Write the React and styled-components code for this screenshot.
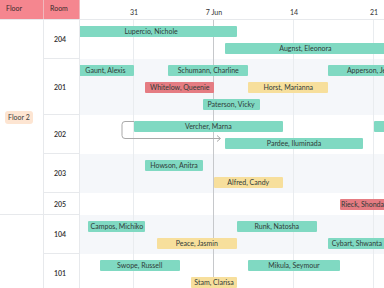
import React from 'react'
import styled, { createGlobalStyle } from 'styled-components'

const DAY = 80 / 7
const ORIGIN = 54 // local x of 31 May inside the track

const GlobalStyle = createGlobalStyle`
    html, body {
        margin: 0;
        padding: 0;
        background: #fff;
        font-family: Lato, "Open Sans", sans-serif;
        color: #333;
    }
`

const colors = {
    green: '#80d9c2',
    red: '#e57c82',
    yellow: '#f7df9c',
}

const floors = [
    {
        name: 'Floor 2',
        rooms: [
            {
                name: '204', lanes: 2, events: [
                    { who: 'Lupercio, Nichole', from: -6, to: 9, lane: 0 },
                    { who: 'Augnst, Eleonora', from: 8, to: 22, lane: 1 },
                ]
            },
            {
                name: '201', lanes: 3, shaded: true, events: [
                    { who: 'Gaunt, Alexis', from: -5, to: 0, lane: 0 },
                    { who: 'Schumann, Charline', from: 3, to: 10, lane: 0 },
                    { who: 'Apperson, Jennell', from: 17, to: 25, lane: 0 },
                    { who: 'Whitelow, Queenie', from: 1, to: 7, lane: 1, color: 'red' },
                    { who: 'Horst, Marianna', from: 10, to: 17, lane: 1, color: 'yellow' },
                    { who: 'Paterson, Vicky', from: 6, to: 11, lane: 2 },
                ]
            },
            {
                name: '202', lanes: 2, arrow: true, events: [
                    { who: 'Vercher, Marna', from: 0, to: 13, lane: 0 },
                    { who: 'Wynn, Dalia', from: 21, to: 29, lane: 0 },
                    { who: 'Pardee, Iluminada', from: 8, to: 20, lane: 1 },
                ]
            },
            {
                name: '203', lanes: 2, shaded: true, events: [
                    { who: 'Howson, Anitra', from: 1, to: 6, lane: 0 },
                    { who: 'Alfred, Candy', from: 7, to: 13, lane: 1, color: 'yellow' },
                ]
            },
            {
                name: '205', lanes: 1, events: [
                    { who: 'Rieck, Shonda', from: 18, to: 22, lane: 0, color: 'red' },
                ]
            },
        ]
    },
    {
        name: 'Floor 1',
        rooms: [
            {
                name: '104', lanes: 2, shaded: true, events: [
                    { who: 'Campos, Michiko', from: -4, to: 1, lane: 0 },
                    { who: 'Runk, Natosha', from: 9, to: 16, lane: 0 },
                    { who: 'Peace, Jasmin', from: 2, to: 9, lane: 1, color: 'yellow' },
                    { who: 'Cybart, Shwanta', from: 17, to: 22, lane: 1 },
                ]
            },
            {
                name: '101', lanes: 2, events: [
                    { who: 'Swope, Russell', from: -3, to: 4, lane: 0 },
                    { who: 'Mikula, Seymour', from: 10, to: 18, lane: 0 },
                    { who: 'Stam, Clarisa', from: 5, to: 9, lane: 1, color: 'yellow' },
                ]
            },
            {
                name: '102', lanes: 2, shaded: true, events: [
                    { who: 'Dorsey, Lenna', from: 0, to: 6, lane: 0 },
                ]
            },
            {
                name: '103', lanes: 2, events: [
                    { who: 'Ortega, Milo', from: 4, to: 12, lane: 0 },
                ]
            },
            {
                name: '105', lanes: 2, shaded: true, events: [
                    { who: 'Baird, Tessa', from: 2, to: 8, lane: 0 },
                ]
            },
            {
                name: '106', lanes: 2, events: [
                    { who: 'Lowe, Irvin', from: 9, to: 15, lane: 0 },
                ]
            },
        ]
    },
]

const ticks = [
    { label: '31', at: 0 },
    { label: '7 Jun', at: 7 },
    { label: '14', at: 14 },
    { label: '21', at: 21 },
]

export default function App() {
    return (
        <Page>
            <GlobalStyle />
            <Header>
                <HeadCell width={44}>Floor</HeadCell>
                <HeadCell width={36}>Room</HeadCell>
                <Scale>
                    {ticks.map(t => (
                        <Tick key={t.label} style={{ left: ORIGIN + t.at * DAY }}>{t.label}</Tick>
                    ))}
                </Scale>
            </Header>
            {floors.map(floor => (
                <FloorGroup key={floor.name}>
                    <FloorCell>
                        <FloorBadge>{floor.name}</FloorBadge>
                    </FloorCell>
                    <Rooms>
                        {floor.rooms.map(room => (
                            <RoomRow key={room.name} lanes={room.lanes}>
                                <RoomCell>{room.name}</RoomCell>
                                <Track shaded={room.shaded}>
                                    {room.events.map(ev => (
                                        <Bar
                                            key={ev.who}
                                            color={colors[ev.color || 'green']}
                                            lane={ev.lane}
                                            style={{
                                                left: ORIGIN + ev.from * DAY,
                                                width: (ev.to - ev.from) * DAY,
                                            }}
                                        >
                                            {ev.who}
                                        </Bar>
                                    ))}
                                    {room.arrow && (
                                        <Link width="160" height="30" viewBox="0 0 160 30">
                                            <path
                                                d="M54 6.5 H45 Q42 6.5 42 9.5 V20.5 Q42 23.5 45 23.5 H140"
                                                fill="none"
                                                stroke="#a9a9a9"
                                                strokeWidth="1"
                                            />
                                            <path
                                                d="M137 20.5 L140.5 23.5 L137 26.5"
                                                fill="none"
                                                stroke="#a9a9a9"
                                                strokeWidth="1"
                                            />
                                        </Link>
                                    )}
                                </Track>
                            </RoomRow>
                        ))}
                    </Rooms>
                </FloorGroup>
            ))}
        </Page>
    )
}

const Page = styled.div`
    width: 384px;
    height: 288px;
    overflow: hidden;
    background: #fff;
`

const Header = styled.div`
    display: flex;
    height: 19px;
    border-bottom: 1px solid #e7e9ec;
`

const HeadCell = styled.div`
    flex-shrink: 0;
    background: #f5868f;
    border-right: 1px solid #f0b8bd;
    padding: 4px 0 0 6px;
    box-sizing: border-box;
    width: ${props => props.width}px;
    font-size: 7px;
    line-height: 9px;
    color: #3a2a2c;
`

const Scale = styled.div`
    position: relative;
    flex: 1;
`

const Tick = styled.span`
    position: absolute;
    top: 7px;
    transform: translateX(-50%);
    font-size: 7px;
    line-height: 10px;
    color: #333;
    white-space: nowrap;
`

const FloorGroup = styled.div`
    display: flex;
`

const FloorCell = styled.div`
    width: 44px;
    flex-shrink: 0;
    box-sizing: border-box;
    border-right: 1px solid #e7e9ec;
    border-bottom: 1px solid #e7e9ec;
    display: flex;
    align-items: center;
    padding-left: 5px;
`

const FloorBadge = styled.span`
    background: #fde5d2;
    border-radius: 3px;
    padding: 2px 3px;
    font-size: 7px;
    line-height: 9px;
    color: #3a3a3a;
`

const Rooms = styled.div`
    flex: 1;
    display: flex;
    flex-direction: column;
`

const RoomRow = styled.div`
    display: flex;
    height: ${props => props.lanes * 17 + 5}px;
`

const RoomCell = styled.div`
    width: 36px;
    flex-shrink: 0;
    box-sizing: border-box;
    border-right: 1px solid #e7e9ec;
    border-bottom: 1px solid #e7e9ec;
    display: flex;
    align-items: center;
    padding-left: 10px;
    font-size: 7px;
    font-weight: 600;
    color: #2e2e2e;
`

const Track = styled.div`
    position: relative;
    flex: 1;
    overflow: hidden;
    background-color: ${props => props.shaded ? '#f5f7fa' : '#fff'};
    background-image:
        linear-gradient(90deg, transparent 133px, #c6c8cb 133px, #c6c8cb 134px, transparent 134px),
        repeating-linear-gradient(90deg, transparent 0, transparent 53px, #e9ecef 53px, #e9ecef 54px, transparent 54px, transparent 80px);
`

const Bar = styled.div`
    position: absolute;
    top: ${props => 6 + props.lane * 17}px;
    height: 11px;
    box-sizing: border-box;
    background: ${props => props.color};
    border-radius: 1px;
    font-size: 7px;
    line-height: 11px;
    text-align: center;
    white-space: nowrap;
    overflow: hidden;
    color: #2f3b38;
`

const Link = styled.svg`
    position: absolute;
    left: 0;
    top: 0;
    pointer-events: none;
`
